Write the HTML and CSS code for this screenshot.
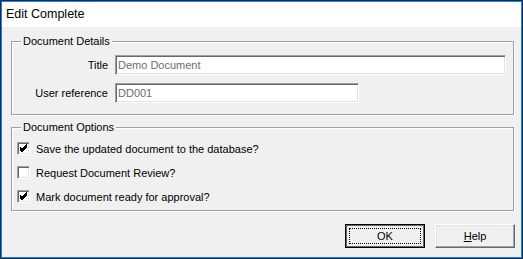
FILE: index.html
```html
<!DOCTYPE html>
<html>
<head>
<meta charset="utf-8">
<link rel="stylesheet" href="styles.css">
</head>
<body>
<div class="window">
  <div class="frame">
    <div class="titlebar">Edit Complete</div>
    <div class="content">
      <div class="group group-details">
        <span class="group-title">Document Details</span>
        <div class="field-row">
          <span class="lbl">Title</span>
          <div class="input input-wide">Demo Document</div>
        </div>
        <div class="field-row">
          <span class="lbl">User reference</span>
          <div class="input input-narrow">DD001</div>
        </div>
      </div>
      <div class="group group-options">
        <span class="group-title">Document Options</span>
        <div class="check-row">
          <span class="cb"><svg width="11" height="11" viewBox="0 0 11 11"><path d="M2 4.5 L4 6.5 L9 1.5 M2 5.5 L4 7.5 L9 2.5 M2 6.5 L4 8.5 L9 3.5" stroke="#000" stroke-width="1" fill="none" shape-rendering="crispEdges"/></svg></span>
          <span class="cb-text">Save the updated document to the database?</span>
        </div>
        <div class="check-row">
          <span class="cb"></span>
          <span class="cb-text">Request Document Review?</span>
        </div>
        <div class="check-row">
          <span class="cb"><svg width="11" height="11" viewBox="0 0 11 11"><path d="M2 4.5 L4 6.5 L9 1.5 M2 5.5 L4 7.5 L9 2.5 M2 6.5 L4 8.5 L9 3.5" stroke="#000" stroke-width="1" fill="none" shape-rendering="crispEdges"/></svg></span>
          <span class="cb-text">Mark document ready for approval?</span>
        </div>
      </div>
      <div class="buttons">
        <div class="btn btn-default"><span class="focus-rect">OK</span></div>
        <div class="btn"><span class="btn-label"><u>H</u>elp</span></div>
      </div>
    </div>
  </div>
</div>
</body>
</html>
```
FILE: styles.css
```css
* { box-sizing: border-box; }
html, body { margin: 0; padding: 0; background: #f0f0f0; }
body {
  font-family: "Liberation Sans", Arial, sans-serif;
  font-size: 11px;
  color: #000;
}
.window {
  width: 523px;
  height: 259px;
  border: 1px solid #0d2f57;
}
.frame {
  width: 100%;
  height: 100%;
  border: 1px solid #2d7dcc;
  display: flex;
  flex-direction: column;
}
.titlebar {
  height: 25px;
  background: #fff;
  font-size: 12.5px;
  line-height: 25px;
  padding-left: 4px;
  color: #000;
}
.content {
  flex: 1;
  background: #f0f0f0;
  display: flex;
  flex-direction: column;
}
.group {
  position: relative;
  margin-left: 9px;
  width: 503px;
  border: 1px solid #a0a0a0;
  box-shadow: 1px 1px 0 #fff, inset 1px 1px 0 #fff;
}
.group-title {
  position: absolute;
  left: 9px;
  top: -8px;
  padding: 0 2px;
  background: #f0f0f0;
  line-height: 14px;
}
.group-details {
  margin-top: 14px;
  height: 74px;
  padding-top: 13px;
  display: flex;
  flex-direction: column;
  gap: 8px;
}
.field-row {
  display: flex;
  align-items: center;
  gap: 7px;
}
.lbl {
  width: 96px;
  text-align: right;
}
.input {
  height: 20px;
  background: #fff;
  border-top: 1px solid #a0a0a0;
  border-left: 1px solid #a0a0a0;
  border-right: 1px solid #fff;
  border-bottom: 1px solid #fff;
  box-shadow: inset 1px 1px 0 #696969, inset -1px -1px 0 #e3e3e3;
  color: #6d6d6d;
  padding-left: 2px;
  line-height: 18px;
}
.input-wide { width: 391px; }
.input-narrow { width: 244px; }
.group-options {
  margin-top: 12px;
  height: 84px;
  padding-top: 14px;
  padding-left: 5px;
  display: flex;
  flex-direction: column;
  gap: 11px;
}
.check-row {
  display: flex;
  align-items: center;
  gap: 6px;
  height: 13px;
}
.cb {
  width: 13px;
  height: 13px;
  background: #fff;
  border-top: 1px solid #a0a0a0;
  border-left: 1px solid #a0a0a0;
  border-right: 1px solid #fff;
  border-bottom: 1px solid #fff;
  box-shadow: inset 1px 1px 0 #696969, inset -1px -1px 0 #e3e3e3;
  display: flex;
  align-items: center;
  justify-content: center;
}
.cb svg { display: block; }
.buttons {
  margin-top: 13px;
  display: flex;
  justify-content: flex-end;
  gap: 10px;
  padding-right: 6px;
}
.btn {
  width: 80px;
  height: 24px;
  background: #f0f0f0;
  border-top: 1px solid #fff;
  border-left: 1px solid #fff;
  border-right: 1px solid #696969;
  border-bottom: 1px solid #696969;
  box-shadow: inset -1px -1px 0 #a0a0a0, inset 1px 1px 0 #e3e3e3;
  display: flex;
  align-items: center;
  justify-content: center;
}
.btn-default {
  border: 1px solid #000;
  box-shadow: inset 0 0 0 1px #696969;
  padding: 3px;
}
.focus-rect {
  width: 100%;
  height: 100%;
  border: 1px dotted #000;
  display: flex;
  align-items: center;
  justify-content: center;
}
```
